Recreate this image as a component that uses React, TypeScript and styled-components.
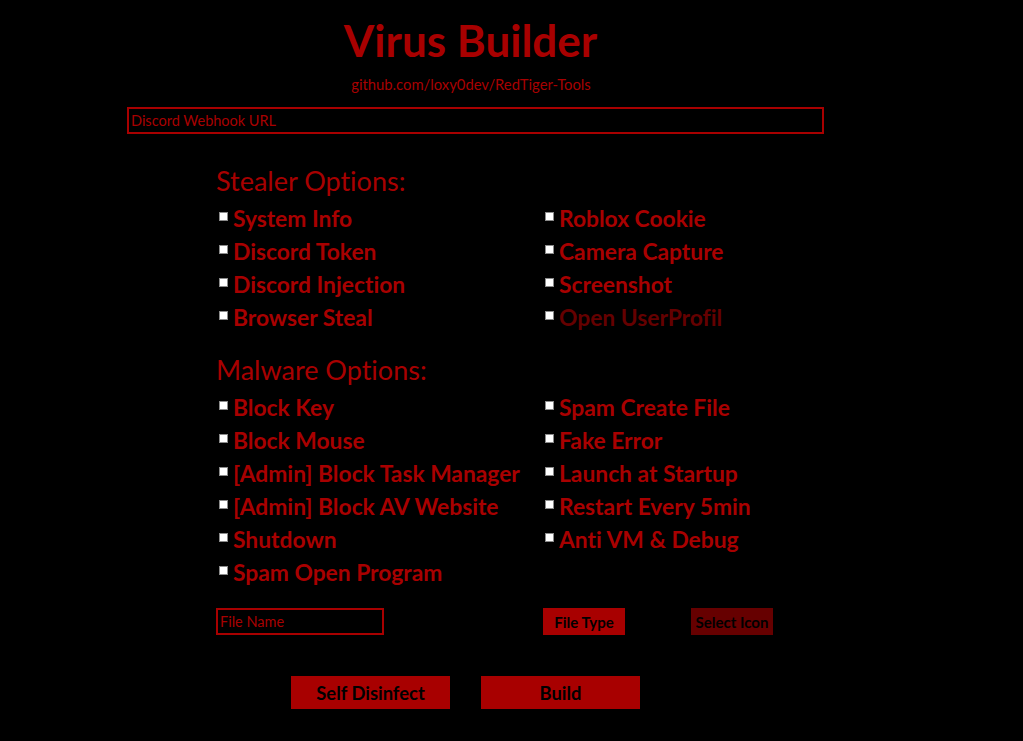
import React from "react";
import styled, { createGlobalStyle } from "styled-components";

const RED = "#a80000";
const DARK = "#650000";

const Global = createGlobalStyle`
  html, body { margin: 0; padding: 0; background: #000; }
  body {
    font-family: Lato, "Liberation Sans", sans-serif;
    overflow: hidden;
    font-variant-ligatures: none;
  }
  input, button { font-variant-ligatures: none; }
`;

const Page = styled.div`
  width: 1023px;
  height: 741px;
  background: #000;
  color: ${RED};
  box-sizing: border-box;
  padding-top: 13px;
`;

const Header = styled.header`
  margin-left: 127px;
  width: 697px;
  display: flex;
  flex-direction: column;
  align-items: center;
`;

const Title = styled.h1`
  margin: 0 0 0 -10px;
  font-size: 44px;
  line-height: 54px;
  font-weight: 700;
  color: ${RED};
`;

const Subtitle = styled.div`
  margin: 8px 0 0 -9px;
  font-size: 14.8px;
  line-height: 18px;
  color: ${RED};
`;

const TextField = styled.input<{ $w: number }>`
  box-sizing: border-box;
  width: ${(p) => p.$w}px;
  height: 27px;
  background: #000;
  border: 2px solid ${RED};
  color: ${RED};
  font-family: Lato, "Liberation Sans", sans-serif;
  font-size: 14.5px;
  padding: 0 2px;
  outline: none;
  &::placeholder { color: ${RED}; opacity: 1; }
`;

const WebhookRow = styled.div`
  margin: 14px 0 0 127px;
`;

const Section = styled.section<{ $top: number }>`
  margin: ${(p) => p.$top}px 0 0 216px;
`;

const SectionTitle = styled.h2`
  margin: 0;
  font-size: 27px;
  line-height: 32px;
  font-weight: 400;
  color: ${RED};
`;

const OptionGrid = styled.div`
  margin-top: 4px;
  display: grid;
  grid-template-columns: 326px auto;
  grid-auto-rows: 33px;
  padding-left: 3px;
`;

const Option = styled.label<{ $dim?: boolean }>`
  display: flex;
  align-items: center;
  gap: 5px;
  font-size: 22.8px;
  font-weight: 700;
  color: ${(p) => (p.$dim ? DARK : RED)};
  white-space: nowrap;
`;

const Box = styled.span`
  width: 9px;
  height: 9px;
  box-sizing: border-box;
  background: #fff;
  border: 1px solid #8a8a8a;
  margin-top: -3px;
  flex: none;
`;

const FileRow = styled.div`
  margin: 20px 0 0 216px;
  display: flex;
  align-items: center;
`;

const SmallButton = styled.button<{ $dark?: boolean; $ml: number }>`
  margin-left: ${(p) => p.$ml}px;
  width: 82px;
  height: 27px;
  border: none;
  background: ${(p) => (p.$dark ? "#660000" : RED)};
  color: #000;
  font-family: Lato, "Liberation Sans", sans-serif;
  font-weight: 700;
  font-size: 15px;
  padding: 0;
`;

const ActionRow = styled.div`
  margin: 41px 0 0 291px;
  display: flex;
  gap: 31px;
`;

const BigButton = styled.button`
  width: 159px;
  height: 33px;
  border: none;
  background: ${RED};
  color: #000;
  font-family: Lato, "Liberation Sans", sans-serif;
  font-weight: 700;
  font-size: 18.4px;
  padding: 0;
`;

type Opt = { label: string; dim?: boolean } | null;

const stealer: Opt[] = [
  { label: "System Info" },
  { label: "Roblox Cookie" },
  { label: "Discord Token" },
  { label: "Camera Capture" },
  { label: "Discord Injection" },
  { label: "Screenshot" },
  { label: "Browser Steal" },
  { label: "Open UserProfil", dim: true },
];

const malware: Opt[] = [
  { label: "Block Key" },
  { label: "Spam Create File" },
  { label: "Block Mouse" },
  { label: "Fake Error" },
  { label: "[Admin] Block Task Manager" },
  { label: "Launch at Startup" },
  { label: "[Admin] Block AV Website" },
  { label: "Restart Every 5min" },
  { label: "Shutdown" },
  { label: "Anti VM & Debug" },
  { label: "Spam Open Program" },
  null,
];

const Options = ({ items }: { items: Opt[] }) => (
  <OptionGrid>
    {items.map((o, i) =>
      o ? (
        <Option key={i} $dim={o.dim}>
          <Box />
          {o.label}
        </Option>
      ) : (
        <span key={i} />
      )
    )}
  </OptionGrid>
);

export default function App() {
  return (
    <Page>
      <Global />
      <Header>
        <Title>Virus Builder</Title>
        <Subtitle>github.com/loxy0dev/RedTiger-Tools</Subtitle>
      </Header>
      <WebhookRow>
        <TextField $w={697} placeholder="Discord Webhook URL" />
      </WebhookRow>
      <Section $top={31}>
        <SectionTitle>Stealer Options:</SectionTitle>
        <Options items={stealer} />
      </Section>
      <Section $top={21}>
        <SectionTitle>Malware Options:</SectionTitle>
        <Options items={malware} />
      </Section>
      <FileRow>
        <TextField $w={168} placeholder="File Name" />
        <SmallButton $ml={159}>File Type</SmallButton>
        <SmallButton $ml={66} $dark>
          Select Icon
        </SmallButton>
      </FileRow>
      <ActionRow>
        <BigButton>Self Disinfect</BigButton>
        <BigButton>Build</BigButton>
      </ActionRow>
    </Page>
  );
}
